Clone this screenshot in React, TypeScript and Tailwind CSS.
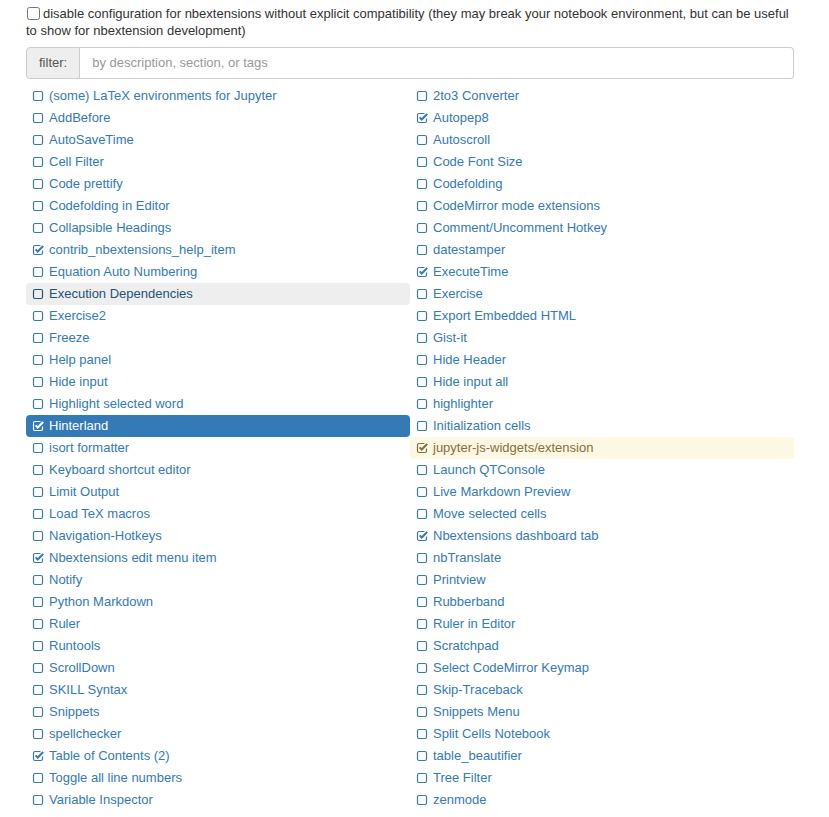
import React from 'react';

type Ext = { name: string; on?: boolean; state?: 'hover' | 'active' | 'warn' };

const left: Ext[] = [
  { name: '(some) LaTeX environments for Jupyter' },
  { name: 'AddBefore' },
  { name: 'AutoSaveTime' },
  { name: 'Cell Filter' },
  { name: 'Code prettify' },
  { name: 'Codefolding in Editor' },
  { name: 'Collapsible Headings' },
  { name: 'contrib_nbextensions_help_item', on: true },
  { name: 'Equation Auto Numbering' },
  { name: 'Execution Dependencies', state: 'hover' },
  { name: 'Exercise2' },
  { name: 'Freeze' },
  { name: 'Help panel' },
  { name: 'Hide input' },
  { name: 'Highlight selected word' },
  { name: 'Hinterland', on: true, state: 'active' },
  { name: 'isort formatter' },
  { name: 'Keyboard shortcut editor' },
  { name: 'Limit Output' },
  { name: 'Load TeX macros' },
  { name: 'Navigation-Hotkeys' },
  { name: 'Nbextensions edit menu item', on: true },
  { name: 'Notify' },
  { name: 'Python Markdown' },
  { name: 'Ruler' },
  { name: 'Runtools' },
  { name: 'ScrollDown' },
  { name: 'SKILL Syntax' },
  { name: 'Snippets' },
  { name: 'spellchecker' },
  { name: 'Table of Contents (2)', on: true },
  { name: 'Toggle all line numbers' },
  { name: 'Variable Inspector' },
];

const right: Ext[] = [
  { name: '2to3 Converter' },
  { name: 'Autopep8', on: true },
  { name: 'Autoscroll' },
  { name: 'Code Font Size' },
  { name: 'Codefolding' },
  { name: 'CodeMirror mode extensions' },
  { name: 'Comment/Uncomment Hotkey' },
  { name: 'datestamper' },
  { name: 'ExecuteTime', on: true },
  { name: 'Exercise' },
  { name: 'Export Embedded HTML' },
  { name: 'Gist-it' },
  { name: 'Hide Header' },
  { name: 'Hide input all' },
  { name: 'highlighter' },
  { name: 'Initialization cells' },
  { name: 'jupyter-js-widgets/extension', on: true, state: 'warn' },
  { name: 'Launch QTConsole' },
  { name: 'Live Markdown Preview' },
  { name: 'Move selected cells' },
  { name: 'Nbextensions dashboard tab', on: true },
  { name: 'nbTranslate' },
  { name: 'Printview' },
  { name: 'Rubberband' },
  { name: 'Ruler in Editor' },
  { name: 'Scratchpad' },
  { name: 'Select CodeMirror Keymap' },
  { name: 'Skip-Traceback' },
  { name: 'Snippets Menu' },
  { name: 'Split Cells Notebook' },
  { name: 'table_beautifier' },
  { name: 'Tree Filter' },
  { name: 'zenmode' },
];

// fa-square-o / fa-check-square-o look-alikes
const Box = ({ on }: { on?: boolean }) => (
  <svg width="12" height="12" viewBox="0 0 12 12" fill="none" stroke="currentColor" className="shrink-0">
    {on ? (
      <>
        <path d="M8.5 1.5H3A1.5 1.5 0 0 0 1.5 3v6A1.5 1.5 0 0 0 3 10.5h6A1.5 1.5 0 0 0 10.5 9V6.5" strokeWidth="1.2" />
        <path d="M3.6 5.4l2.1 2.1L11.2 2" strokeWidth="2" />
      </>
    ) : (
      <rect x="1.5" y="1.5" width="9" height="9" rx="1.5" strokeWidth="1.2" />
    )}
  </svg>
);

const Row = ({ ext }: { ext: Ext }) => {
  const tone =
    ext.state === 'active'
      ? 'bg-[#337ab7] text-white'
      : ext.state === 'hover'
        ? 'bg-[#eeeeee] text-[#23527c]'
        : ext.state === 'warn'
          ? 'bg-[#fcf8e3] text-[#8a6d3b]'
          : 'text-[#337ab7]';
  return (
    <div className={`flex items-center gap-[5px] h-[22px] px-[6px] rounded-[4px] ${tone}`}>
      <Box on={ext.on} />
      <span className="whitespace-nowrap">{ext.name}</span>
    </div>
  );
};

export default function App() {
  return (
    <div className="bg-white min-h-[817px] font-['Liberation_Sans',Arial,sans-serif] text-[13px] text-[#333333]">
      <div className="w-[768px] ml-[26px] pt-[5px]">
        <label className="block leading-[17px]">
          <input type="checkbox" className="align-[-2px] mr-[3px] ml-px w-[13px] h-[13px]" />
          disable configuration for nbextensions without explicit compatibility (they may break your notebook environment, but can be useful to show for nbextension development)
        </label>

        <div className="flex mt-[8px] h-[32px]">
          <span className="flex items-center px-[12px] bg-[#eeeeee] border border-[#cccccc] rounded-l-[4px] text-[#555555]">
            filter:
          </span>
          <input
            className="flex-1 px-[12px] border border-l-0 border-[#cccccc] rounded-r-[4px] outline-none placeholder:text-[#999999] text-[#555555]"
            placeholder="by description, section, or tags"
          />
        </div>

        <div className="grid grid-cols-2 mt-[6px]">
          <div className="flex flex-col">
            {left.map((e) => (
              <Row key={e.name} ext={e} />
            ))}
          </div>
          <div className="flex flex-col">
            {right.map((e) => (
              <Row key={e.name} ext={e} />
            ))}
          </div>
        </div>
      </div>
    </div>
  );
}
